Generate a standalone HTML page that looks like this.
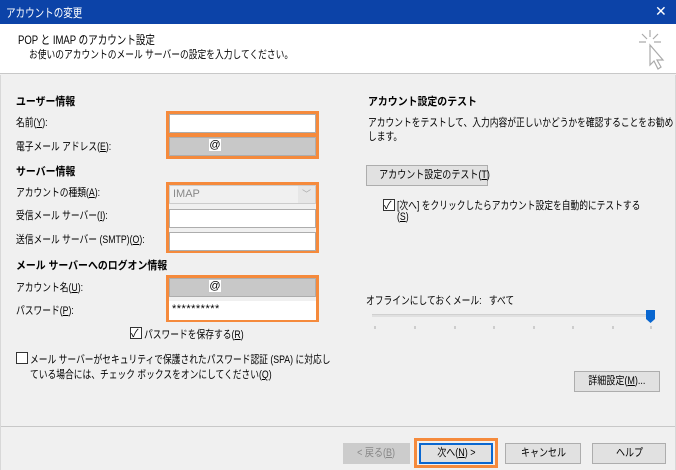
<!DOCTYPE html>
<html><head><meta charset="utf-8"><style>
*{margin:0;padding:0;box-sizing:border-box}
body{width:676px;height:470px;overflow:hidden;background:#f0f0f0;font-family:"Liberation Sans","Noto Sans CJK JP",sans-serif;font-size:11px;color:#000;position:relative}
.a{position:absolute;white-space:nowrap}
.s{transform:scaleX(.795);transform-origin:0 0}
.b{font-weight:bold;transform:scaleX(.9);transform-origin:0 0}
.title{left:0;top:0;width:676px;height:24px;background:#0c43a8;color:#fff}
.hdr{left:0;top:24px;width:676px;height:50px;background:#fff;border-bottom:1px solid #c8c8c8}
.ob{position:absolute;border:3px solid #f58a3c;left:166px;width:153px}
.in{position:absolute;left:169px;width:147px;height:19px;background:#fff;border:1px solid #adadad}
.gr{background:#c8c8c8}
.btn{position:absolute;height:21px;background:#e1e1e1;border:1px solid #adadad;text-align:center;line-height:19px;white-space:nowrap}
.btn span{display:inline-block;transform:scaleX(.82)}
.cb{position:absolute;width:12px;height:12px;border:1px solid #333;background:#fff}
u{text-decoration:underline}
</style></head><body>
<div class="a title"><span class="a s" style="left:6px;top:4px;font-size:12px">アカウントの変更</span><span class="a" style="left:655px;top:3px;font-size:14px">✕</span></div>
<div class="a hdr">
<span class="a s" style="left:18px;top:7px;font-size:12px">POP と IMAP のアカウント設定</span>
<span class="a s" style="left:29px;top:22px">お使いのアカウントのメール サーバーの設定を入力してください。</span>
<svg class="a" style="left:636px;top:4px" width="30" height="44" viewBox="0 0 30 44" fill="none" stroke="#aaa" stroke-width="1.2"><path d="M14 2v7M6 6l5 5M22 6l-5 5M3 14h7M18 14h7M14 18v1"/><path d="M14 17l0 20 4-4 4 8 3-2-4-7 6 0z" fill="#fff"/></svg>
</div>
<div class="a" style="left:0;top:75px;width:1px;height:395px;background:#d8d8d8"></div>
<div class="a" style="left:675px;top:75px;width:1px;height:395px;background:#d8d8d8"></div>

<span class="a b" style="left:16px;top:93px">ユーザー情報</span>
<span class="a s" style="left:16px;top:114px">名前(<u>Y</u>):</span>
<span class="a s" style="left:16px;top:138px">電子メール アドレス(<u>E</u>):</span>
<span class="a b" style="left:16px;top:163px">サーバー情報</span>
<span class="a s" style="left:16px;top:184px">アカウントの種類(<u>A</u>):</span>
<span class="a s" style="left:16px;top:207px">受信メール サーバー(<u>I</u>):</span>
<span class="a s" style="left:16px;top:231px">送信メール サーバー (SMTP)(<u>O</u>):</span>
<span class="a b" style="left:16px;top:257px">メール サーバーへのログオン情報</span>
<span class="a s" style="left:16px;top:279px">アカウント名(<u>U</u>):</span>
<span class="a s" style="left:16px;top:302px">パスワード(<u>P</u>):</span>

<div class="ob" style="top:111px;height:25px"></div>
<div class="ob" style="top:134px;height:25px"></div>
<div class="in" style="top:114px"></div>
<div class="in gr" style="top:137px"><span class="a" style="left:39px;top:1px;width:12px;background:#fff;text-align:center">@</span></div>
<div class="ob" style="top:182px;height:71px"></div>
<div class="in" style="top:185px;background:#f0f0f0;border-color:#ccc"><span class="a" style="left:3px;top:2px;color:#888">IMAP</span><span class="a" style="right:0;top:0;width:17px;height:17px;background:#e6e6e6;color:#aaa;text-align:center;font-size:9px;line-height:17px">﹀</span></div>
<div class="in" style="top:209px"></div>
<div class="in" style="top:232px"></div>
<div class="ob" style="top:275px;height:47px"></div>
<div class="in gr" style="top:278px"><span class="a" style="left:39px;top:1px;width:12px;background:#fff;text-align:center">@</span></div>
<div class="in" style="top:301px;border:none;background:#fff"><span class="a" style="left:3px;top:2px;letter-spacing:0.5px">**********</span></div>

<div class="cb" style="left:130px;top:327px"><span class="a" style="left:0;top:-3px;font-size:11px">✓</span></div>
<span class="a s" style="left:144px;top:326px">パスワードを保存する(<u>R</u>)</span>
<div class="cb" style="left:16px;top:352px"></div>
<span class="a s" style="left:30px;top:351px">メール サーバーがセキュリティで保護されたパスワード認証 (SPA) に対応し</span>
<span class="a s" style="left:30px;top:366px">ている場合には、チェック ボックスをオンにしてください(<u>Q</u>)</span>

<span class="a b" style="left:368px;top:93px">アカウント設定のテスト</span>
<span class="a s" style="left:368px;top:114px">アカウントをテストして、入力内容が正しいかどうかを確認することをお勧め</span>
<span class="a s" style="left:368px;top:128px">します。</span>
<div class="btn" style="left:366px;top:165px;width:122px"><span>アカウント設定のテスト(<u>T</u>)</span></div>
<div class="cb" style="left:383px;top:199px"><span class="a" style="left:0;top:-3px;font-size:11px">✓</span></div>
<span class="a s" style="left:397px;top:197px">[次へ] をクリックしたらアカウント設定を自動的にテストする</span>
<span class="a s" style="left:397px;top:211px">(<u>S</u>)</span>
<span class="a s" style="left:366px;top:292px">オフラインにしておくメール:&nbsp;&nbsp;&nbsp;すべて</span>
<div class="a" style="left:372px;top:314px;width:282px;height:3px;background:#e0e0e0;border-top:1px solid #d0d0d0"></div>
<svg class="a" style="left:646px;top:310px" width="9" height="13"><path d="M0 0h9v9l-4.5 4L0 9z" fill="#0a67d0"/></svg>
<svg class="a" style="left:370px;top:324px" width="286" height="6"><g stroke="#aaa"><path d="M5 2v3M45 2v3M85 2v3M124 2v3M164 2v3M203 2v3M243 2v3M281 2v3"/></g></svg>
<div class="btn" style="left:574px;top:371px;width:86px"><span>詳細設定(<u>M</u>)...</span></div>

<div class="a" style="left:1px;top:426px;width:674px;height:1px;background:#c8c8c8"></div>
<div class="btn" style="left:343px;top:443px;width:67px;background:#ccc;border-color:#ccc;color:#888"><span>&lt; 戻る(<u>B</u>)</span></div>
<div class="a" style="left:414px;top:438px;width:84px;height:30px;border:3px solid #f58a3c"></div>
<div class="btn" style="left:419px;top:443px;width:74px;border:2px solid #0a67d0;line-height:17px"><span>次へ(<u>N</u>) &gt;</span></div>
<div class="btn" style="left:505px;top:443px;width:76px"><span>キャンセル</span></div>
<div class="btn" style="left:592px;top:443px;width:74px"><span>ヘルプ</span></div>
</body></html>
